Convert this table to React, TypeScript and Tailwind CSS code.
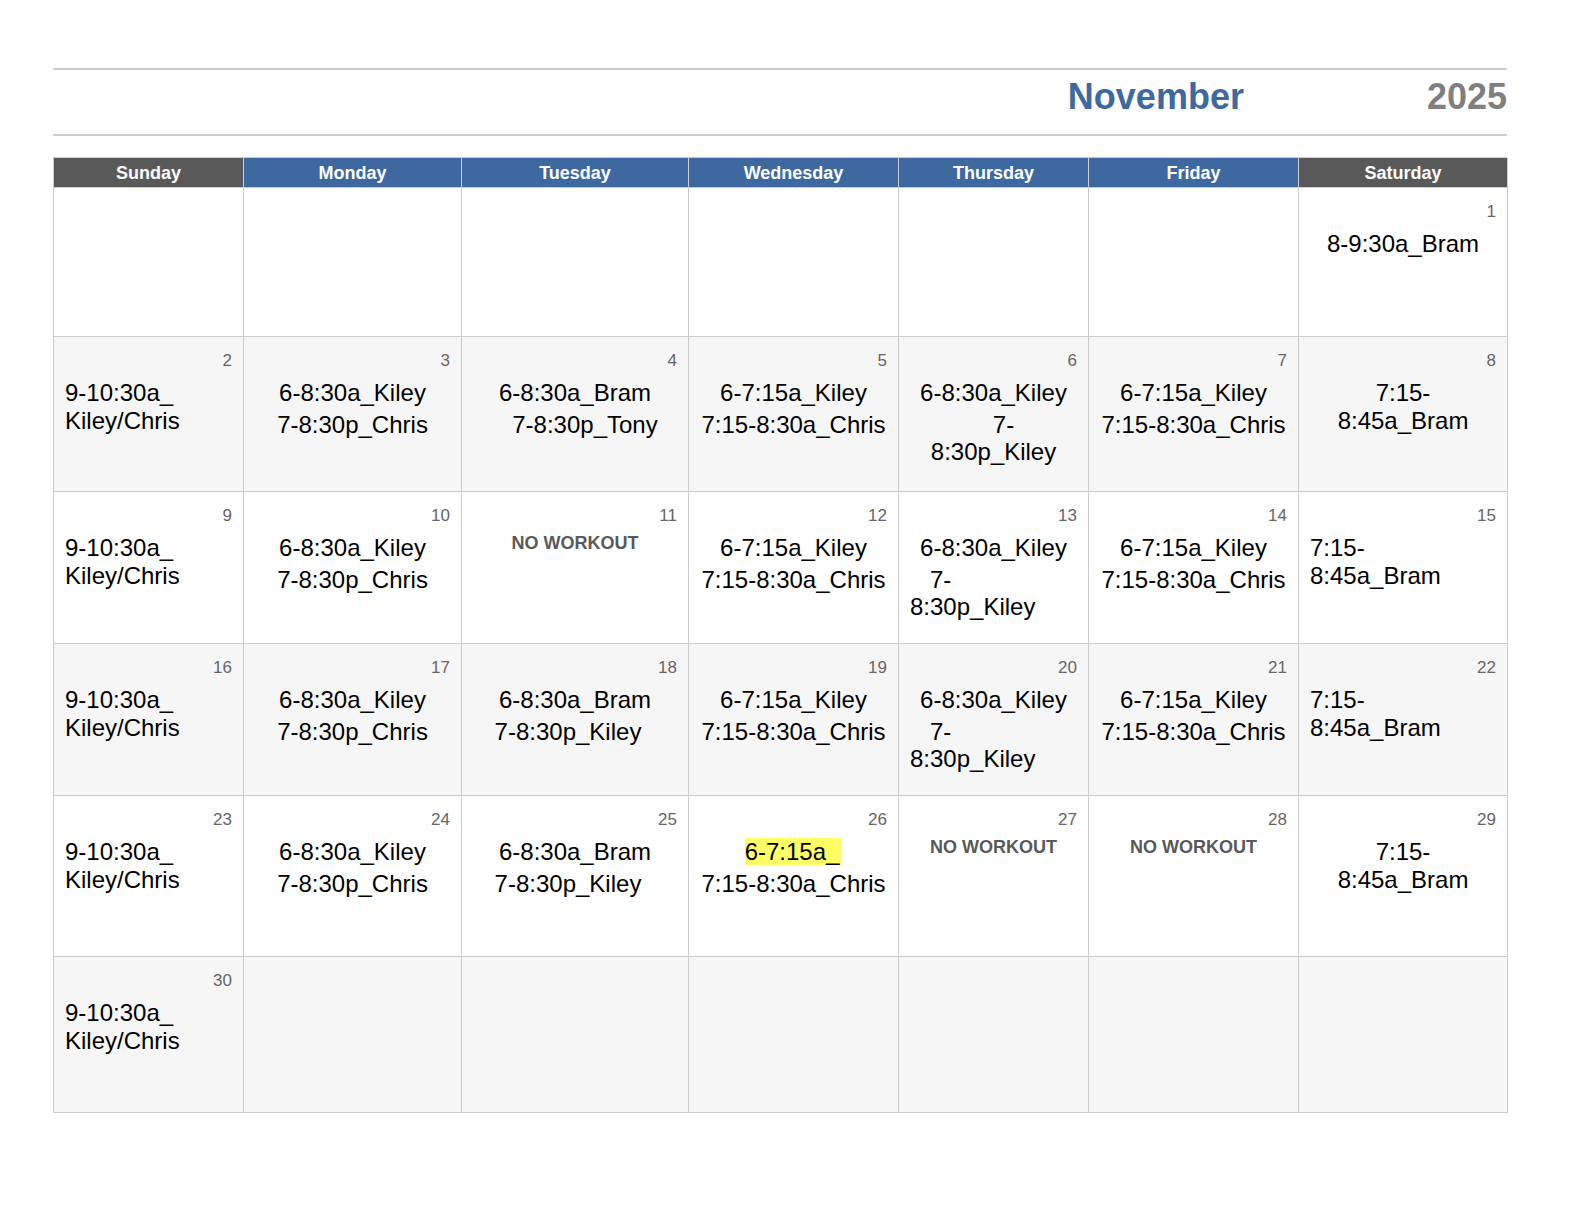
type Line = string | { t: string; pl?: number; pr?: number; hl?: boolean };
type Para = { align: "c" | "l"; lines: Line[] };
type Cell = { d?: number; paras?: Para[]; off?: boolean };

const days = ["Sunday", "Monday", "Tuesday", "Wednesday", "Thursday", "Friday", "Saturday"];

const sun = (d: number): Cell => ({ d, paras: [{ align: "l", lines: ["9-10:30a_", "Kiley/Chris"] }] });
const monKC = (d: number): Cell => ({
  d,
  paras: [
    { align: "c", lines: ["6-8:30a_Kiley"] },
    { align: "c", lines: ["7-8:30p_Chris"] },
  ],
});
const wedKC = (d: number): Cell => ({
  d,
  paras: [
    { align: "c", lines: ["6-7:15a_Kiley"] },
    { align: "c", lines: ["7:15-8:30a_Chris"] },
  ],
});
const thuKK = (d: number, second: "c" | "l"): Cell => ({
  d,
  paras: [
    { align: "c", lines: ["6-8:30a_Kiley"] },
    { align: second, lines: [{ t: "7-", pl: 20 }, "8:30p_Kiley"] },
  ],
});
const tueBK = (d: number): Cell => ({
  d,
  paras: [
    { align: "c", lines: ["6-8:30a_Bram"] },
    { align: "c", lines: [{ t: "7-8:30p_Kiley", pr: 14 }] },
  ],
});
const satB = (d: number, align: "c" | "l"): Cell => ({ d, paras: [{ align, lines: ["7:15-", "8:45a_Bram"] }] });
const off = (d: number): Cell => ({ d, off: true });

const weeks: Cell[][] = [
  [{}, {}, {}, {}, {}, {}, { d: 1, paras: [{ align: "c", lines: ["8-9:30a_Bram"] }] }],
  [
    sun(2),
    monKC(3),
    {
      d: 4,
      paras: [
        { align: "c", lines: ["6-8:30a_Bram"] },
        { align: "c", lines: [{ t: "7-8:30p_Tony", pl: 20 }] },
      ],
    },
    wedKC(5),
    thuKK(6, "c"),
    wedKC(7),
    satB(8, "c"),
  ],
  [sun(9), monKC(10), off(11), wedKC(12), thuKK(13, "l"), wedKC(14), satB(15, "l")],
  [sun(16), monKC(17), tueBK(18), wedKC(19), thuKK(20, "l"), wedKC(21), satB(22, "l")],
  [
    sun(23),
    monKC(24),
    tueBK(25),
    {
      d: 26,
      paras: [
        { align: "c", lines: [{ t: "6-7:15a_", hl: true }] },
        { align: "c", lines: ["7:15-8:30a_Chris"] },
      ],
    },
    off(27),
    off(28),
    satB(29, "c"),
  ],
  [sun(30), {}, {}, {}, {}, {}, {}],
];

const rowHeights = ["h-[149px]", "h-[155px]", "h-[152px]", "h-[152px]", "h-[161px]", "h-[156px]"];

function DayCell({ cell, shaded, height }: { cell: Cell; shaded: boolean; height: string }) {
  return (
    <div
      className={`${height} border-r border-b border-[#cccccc] pl-[11px] pr-[11px] pt-[14px] ${
        shaded ? "bg-[#f6f6f6]" : "bg-white"
      }`}
    >
      {cell.d !== undefined && (
        <div className="text-right text-[17px] leading-[20px] text-[#666666]">{cell.d}</div>
      )}
      {cell.off && (
        <div className="mt-[8px] text-center text-[18px] font-bold leading-[19px] text-[#595959]">
          NO WORKOUT
        </div>
      )}
      {cell.paras && (
        <div className="mt-[8px] text-[24px] leading-[27.5px] text-black">
          {cell.paras.map((p, i) => (
            <div key={i} className={`${i > 0 ? "mt-[4px]" : ""} ${p.align === "c" ? "text-center" : "text-left"}`}>
              {p.lines.map((ln, j) => {
                const l = typeof ln === "string" ? { t: ln } : ln;
                return (
                  <div
                    key={j}
                    className="whitespace-nowrap"
                    style={{ paddingLeft: l.pl ?? 0, paddingRight: l.pr ?? 0 }}
                  >
                    {l.hl ? <span className="bg-[#ffff66] pr-[3px]">{l.t}</span> : l.t}
                  </div>
                );
              })}
            </div>
          ))}
        </div>
      )}
    </div>
  );
}

export default function App() {
  return (
    <div className="min-h-[1228px] w-[1584px] bg-white font-['Liberation_Sans',Arial,sans-serif]">
      <div className="ml-[53px] w-[1454px] pt-[68px]">
        <div className="flex h-[68px] items-start justify-end gap-[183px] border-y-2 border-[#cccccc] pt-[9px] text-[36px] font-bold leading-[36px]">
          <span className="text-[#3e69a1]">November</span>
          <span className="text-[#7f7f7f]">2025</span>
        </div>

        <div className="mt-[21px] grid grid-cols-[190px_218px_227px_210px_190px_210px_209px] border-t border-l border-[#cccccc]">
          {days.map((d, i) => (
            <div
              key={d}
              className={`flex h-[30px] items-center justify-center border-r border-b border-[#cccccc] pt-[2px] text-[18px] font-bold text-white ${
                i === 0 || i === 6 ? "bg-[#595959]" : "bg-[#3e69a0]"
              }`}
            >
              {d}
            </div>
          ))}
          {weeks.map((week, r) =>
            week.map((cell, c) => (
              <DayCell key={`${r}-${c}`} cell={cell} shaded={r % 2 === 1} height={rowHeights[r]} />
            ))
          )}
        </div>
      </div>
    </div>
  );
}
